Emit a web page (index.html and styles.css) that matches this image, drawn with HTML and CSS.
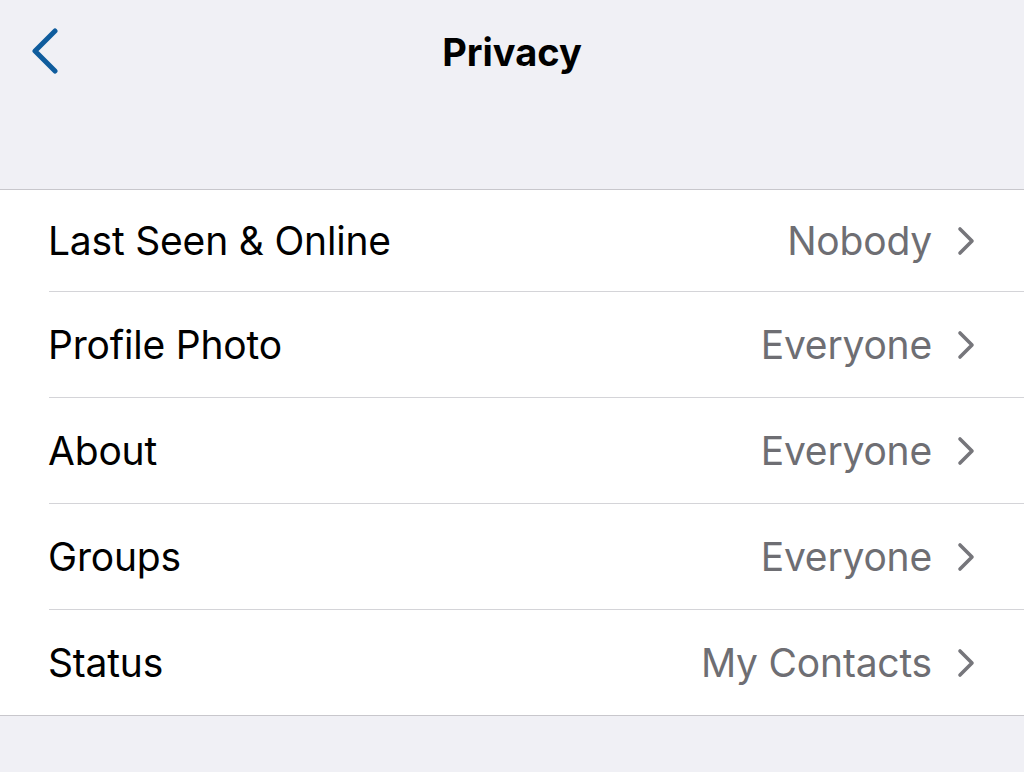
FILE: index.html
```html
<!DOCTYPE html>
<html lang="en">
<head>
<meta charset="UTF-8" />
<meta name="viewport" content="width=device-width, initial-scale=1" />
<title>Privacy</title>
<link rel="stylesheet" href="styles.css">
</head>
<body>
<div class="screen">
    <!-- Navigation bar -->
    <header class="nav">
        <button class="back" aria-label="Back">
            <svg width="30" height="46" viewBox="0 0 30 46">
                <path d="M25 3 L5 23 L25 43" fill="none" stroke="#0f5c9d" stroke-width="5" stroke-linecap="round" stroke-linejoin="round"/>
            </svg>
        </button>
        <h1 class="title">Privacy</h1>
    </header>

    <!-- Settings list -->
    <ul class="list">
        <li class="row first">
            <span class="label">Last Seen &amp; Online</span>
            <span class="value">Nobody</span>
            <svg class="chev" width="20" height="30" viewBox="0 0 20 30"><path d="M4 3 L16 15 L4 27" fill="none" stroke="#76767b" stroke-width="3.6" stroke-linecap="round" stroke-linejoin="round"/></svg>
        </li>
        <li class="row">
            <span class="label">Profile Photo</span>
            <span class="value">Everyone</span>
            <svg class="chev" width="20" height="30" viewBox="0 0 20 30"><path d="M4 3 L16 15 L4 27" fill="none" stroke="#76767b" stroke-width="3.6" stroke-linecap="round" stroke-linejoin="round"/></svg>
        </li>
        <li class="row">
            <span class="label">About</span>
            <span class="value">Everyone</span>
            <svg class="chev" width="20" height="30" viewBox="0 0 20 30"><path d="M4 3 L16 15 L4 27" fill="none" stroke="#76767b" stroke-width="3.6" stroke-linecap="round" stroke-linejoin="round"/></svg>
        </li>
        <li class="row">
            <span class="label">Groups</span>
            <span class="value">Everyone</span>
            <svg class="chev" width="20" height="30" viewBox="0 0 20 30"><path d="M4 3 L16 15 L4 27" fill="none" stroke="#76767b" stroke-width="3.6" stroke-linecap="round" stroke-linejoin="round"/></svg>
        </li>
        <li class="row">
            <span class="label">Status</span>
            <span class="value">My Contacts</span>
            <svg class="chev" width="20" height="30" viewBox="0 0 20 30"><path d="M4 3 L16 15 L4 27" fill="none" stroke="#76767b" stroke-width="3.6" stroke-linecap="round" stroke-linejoin="round"/></svg>
        </li>
    </ul>
</div>
</body>
</html>
```

FILE: styles.css
```css
body {
margin: 0;
background: #f0f0f5;
font-family: Inter, "Noto Sans", sans-serif;
color: #000;
}
.screen {
height: 772px;
overflow: hidden;
}
/* Top bar: back chevron on the left, title centred */
.nav {
height: 189px;
display: grid;
grid-template-columns: 80px 1fr 80px;
align-items: start;
}
.back {
margin: 28px 0 0 30px;
padding: 0;
border: none;
background: none;
width: 30px;
height: 46px;
}
.back svg {
display: block;
}
.title {
margin: 32px 0 0;
text-align: center;
font-size: 38px;
font-weight: 700;
line-height: 40px;
}
.list {
list-style: none;
margin: 0;
padding: 0 0 0 49px;
background: #fff;
border-top: 1px solid #c8c7cc;
border-bottom: 1px solid #c8c7cc;
}
.row {
height: 105px;
display: flex;
align-items: center;
border-top: 1px solid #d4d4d8;
padding-right: 48px;
}
.row.first {
height: 101px;
border-top: none;
}
.label {
flex: 1;
font-size: 39px;
letter-spacing: -0.2px;
margin-left: -1px;
}
.value {
font-size: 39px;
letter-spacing: -0.2px;
color: #6e6e73;
margin-right: 24px;
}
.chev {
display: block;
}
```
